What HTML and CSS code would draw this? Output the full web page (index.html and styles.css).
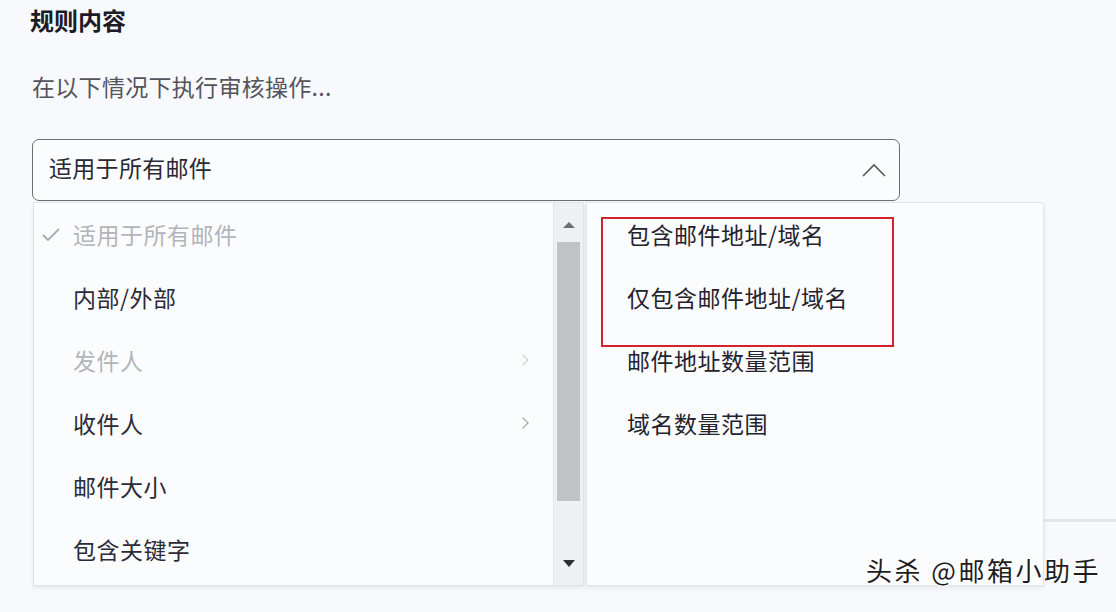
FILE: index.html
```html
<!doctype html>
<html lang="zh-CN">
<head>
    <meta charset="UTF-8">
    <title>规则内容</title>
    <link rel="stylesheet" href="styles.css">
</head>
<body>
    <div id="page">
        <h2 class="title">规则内容</h2>
        <p class="desc">在以下情况下执行审核操作...</p>
        <div class="select-wrap">
            <div class="select">
                <span class="value">适用于所有邮件</span>
                <svg class="arrow-up" width="24" height="14" viewBox="0 0 24 14"><path d="M1 13 L12 2 L23 13" fill="none" stroke="#5a5a5a" stroke-width="1.6"/></svg>
            </div>
            <div class="dropdown">
                <div class="menu">
                    <ul class="list">
                        <li class="disabled checked">
                            <svg class="check" width="18" height="14" viewBox="0 0 18 14"><path d="M1 7 L6 12 L17 1" fill="none" stroke="#a9abb0" stroke-width="1.8"/></svg>
                            适用于所有邮件
                        </li>
                        <li>内部/外部</li>
                        <li class="disabled has-sub">发件人</li>
                        <li class="has-sub">收件人</li>
                        <li>邮件大小</li>
                        <li>包含关键字</li>
                    </ul>
                    <div class="scrollbar">
                        <span class="btn up"></span>
                        <span class="thumb"></span>
                        <span class="btn down"></span>
                    </div>
                </div>
                <div class="submenu">
                    <ul class="list">
                        <li>包含邮件地址/域名</li>
                        <li>仅包含邮件地址/域名</li>
                        <li>邮件地址数量范围</li>
                        <li>域名数量范围</li>
                    </ul>
                    <div class="mark"></div>
                </div>
            </div>
        </div>
        <div class="next-section"></div>
    </div>
    <div class="watermark">头杀 @邮箱小助手</div>
</body>
</html>
```

FILE: styles.css
```css
*{
    margin:0;
    padding:0;
    box-sizing: border-box;
}
ul,li{
    list-style: none;
}
html,body{
    height: 100%;
}
body{
    background: #f8f9fc;
    font-family: "Noto Sans CJK SC", "Noto Sans", sans-serif;
    color: #2b2b33;
    overflow: hidden;
    position: relative;
}
#page{
    padding: 5px 0 0 32px;
}
.title{
    font-size: 24px;
    font-weight: bold;
    line-height: 30px;
    color: #1c1b27;
    margin-left: -2px;
}
.desc{
    margin-top: 36px;
    font-size: 23px;
    line-height: 30px;
    letter-spacing: 0.3px;
    color: #55545e;
}
.select-wrap{
    position: relative;
    width: 868px;
    margin-top: 38px;
}
.select{
    height: 62px;
    border: 1px solid #6c6c72;
    border-radius: 7px;
    background: #fbfcfe;
    display: flex;
    align-items: center;
    justify-content: space-between;
    padding: 0 13px 0 16px;
    font-size: 23px;
    letter-spacing: 0.3px;
    color: #2a2933;
}
.value{
    margin-bottom: 6px;
}
.arrow-up{
    margin-bottom: 1px;
}
.dropdown{
    position: absolute;
    top: 63px;
    left: 1px;
    display: flex;
    z-index: 2;
}
.menu{
    width: 551px;
    height: 384px;
    display: flex;
    background: #fbfcfe;
    border: 1px solid #e2e4e8;
    box-shadow: 0 2px 4px rgba(0,0,0,0.08);
}
.list{
    flex: 1;
}
.list li{
    height: 63px;
    line-height: 63px;
    font-size: 23px;
    letter-spacing: 0.5px;
    color: #2c2b35;
    padding-left: 39px;
    position: relative;
}
.list li.disabled{
    color: #b3b4ba;
}
.list li.has-sub:after{
    content: "";
    position: absolute;
    right: 26px;
    top: 27px;
    width: 7px;
    height: 7px;
    border-top: 1.3px solid #9a9aa2;
    border-right: 1.3px solid #9a9aa2;
    transform: rotate(45deg);
}
.list li.disabled.has-sub:after{
    border-color: #c6c7cc;
}
.check{
    position: absolute;
    left: 8px;
    top: 25px;
}
.scrollbar{
    width: 30px;
    background: #eff0f3;
    border-left: 1px solid #e4e5e9;
    display: flex;
    flex-direction: column;
    align-items: center;
    padding: 3px 0;
}
.btn{
    height: 36px;
    width: 100%;
    position: relative;
}
.btn:after{
    content: "";
    position: absolute;
    left: 9px;
    border-left: 6px solid transparent;
    border-right: 6px solid transparent;
}
.btn.up:after{
    top: 16px;
    border-bottom: 6px solid #6e6d76;
}
.btn.down{
    margin-top: auto;
}
.btn.down:after{
    top: 14px;
    border-top: 7px solid #2f2e36;
}
.thumb{
    width: 23px;
    height: 259px;
    background: #c1c2c6;
}
.submenu{
    width: 458px;
    height: 384px;
    margin-left: 2px;
    background: #fbfcfe;
    border: 1px solid #e2e4e8;
    border-radius: 0 4px 0 0;
    box-shadow: 0 2px 4px rgba(0,0,0,0.08);
    position: relative;
}
.submenu .list li{
    padding-left: 40px;
    color: #24232d;
}
.mark{
    position: absolute;
    left: 14px;
    top: 14px;
    width: 293px;
    height: 130px;
    border: 2px solid #d3232f;
}
.next-section{
    margin-top: 318px;
    margin-left: 600px;
    border-top: 3px solid #e3e5e9;
}
.watermark{
    position: absolute;
    left: 866px;
    top: 552px;
    font-size: 26px;
    line-height: 36px;
    letter-spacing: 2.5px;
    color: #1e1e1e;
    text-shadow: 1px 1px 0 #ffffff, -1px -1px 0 #ffffff, 1px -1px 0 #ffffff, -1px 1px 0 #ffffff;
    z-index: 3;
}
```
